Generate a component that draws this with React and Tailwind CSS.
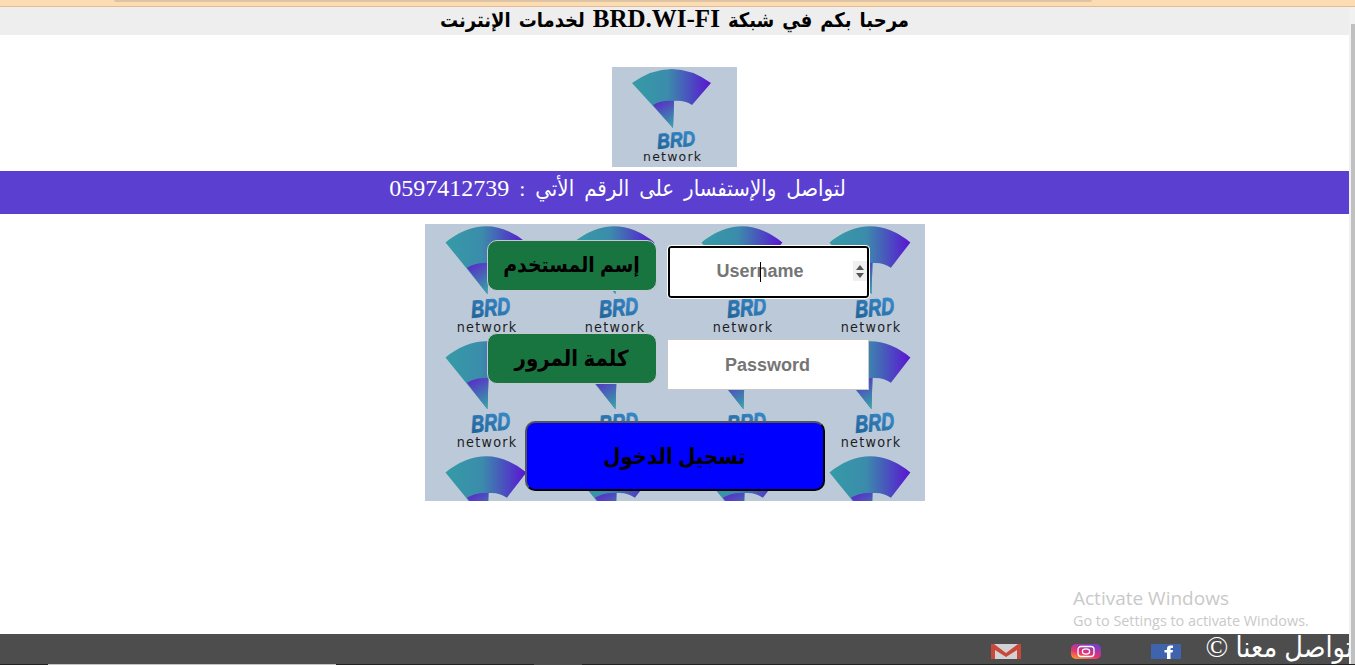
import React from 'react';

const serif = { fontFamily: '"Liberation Serif", "DejaVu Sans Condensed", "DejaVu Sans", serif' };
const arial = { fontFamily: '"Liberation Sans", sans-serif' };

function Logo({ id, className }) {
  return (
    <svg viewBox="0 0 125 100" preserveAspectRatio="none" className={className}>
      <defs>
        <linearGradient id={id + 'a'} x1="0" x2="1" y1="0" y2="0">
          <stop offset="0" stopColor="#359ba6" />
          <stop offset="0.45" stopColor="#3b8cab" />
          <stop offset="1" stopColor="#5a14d2" />
        </linearGradient>
        <linearGradient id={id + 'b'} x1="0.3" x2="0.7" y1="0" y2="1">
          <stop offset="0" stopColor="#5a2cc8" />
          <stop offset="1" stopColor="#37a0a6" />
        </linearGradient>
        <linearGradient id={id + 'c'} x1="0" x2="1" y1="1" y2="0">
          <stop offset="0" stopColor="#1c5f94" />
          <stop offset="1" stopColor="#3a8fd0" />
        </linearGradient>
      </defs>
      <path d="M20 16 Q60 -12 99 16 L80 38 Q72 33 62 34 L61 61 Z" fill={`url(#${id}a)`} />
      <path d="M41 38 Q50 33 62 34 L61 61 Z" fill={`url(#${id}b)`} />
      <text
        x="45"
        y="80"
        textLength="38"
        lengthAdjust="spacingAndGlyphs"
        transform="rotate(-5 64 72)"
        fontSize="21"
        fontWeight="700"
        fontStyle="italic"
        fill={`url(#${id}c)`}
        stroke={`url(#${id}c)`}
        strokeWidth="0.8"
        fontFamily="Liberation Sans, sans-serif"
      >
        BRD
      </text>
      <text x="31" y="93.5" textLength="58" lengthAdjust="spacing" fontSize="12.5" fill="#1d1d1d" fontFamily="DejaVu Sans, sans-serif">
        network
      </text>
    </svg>
  );
}

function FieldLabel({ children }) {
  return (
    <div
      className="w-[170px] h-[51px] shrink-0 flex items-center justify-center rounded-[10px] border border-[#c4c9cf] bg-[#197540] text-black text-[22px] font-bold font-stretch-condensed whitespace-nowrap"
      style={serif}
    >
      {children}
    </div>
  );
}

function GmailIcon() {
  return (
    <svg viewBox="0 0 30 15" className="w-[30px] h-[15px]">
      <rect width="30" height="15" fill="#d2d2d2" />
      <path d="M0 0 H3 L15 9 L27 0 H30 V15 H26 V6 L15 13 L4 6 V15 H0 Z" fill="#c9483c" />
    </svg>
  );
}

function InstagramIcon() {
  return (
    <svg viewBox="0 0 30 15" className="w-[30px] h-[15px]">
      <defs>
        <linearGradient id="ig" x1="0" x2="0.6" y1="1" y2="0">
          <stop offset="0" stopColor="#f9a825" />
          <stop offset="0.45" stopColor="#e8336f" />
          <stop offset="1" stopColor="#7a3fc4" />
        </linearGradient>
      </defs>
      <rect width="30" height="15" rx="5" fill="url(#ig)" />
      <rect x="7" y="2.5" width="16" height="10" rx="3" fill="none" stroke="#fff" strokeWidth="1.3" />
      <ellipse cx="15" cy="7.5" rx="3.6" ry="2.6" fill="none" stroke="#fff" strokeWidth="1.3" />
    </svg>
  );
}

function FacebookIcon() {
  return (
    <svg viewBox="0 0 30 15" className="w-[30px] h-[15px]">
      <rect width="30" height="15" fill="#3f64ad" />
      <path d="M16 15 V8.5 H13.5 V6 H16 V4.5 Q16 1.5 19.5 1.5 H22 V4 H20.5 Q19.5 4 19.5 5 V6 H22 L21.5 8.5 H19.5 V15 Z" fill="#fff" />
    </svg>
  );
}

export default function App() {
  const tiles = Array.from({ length: 12 }, (_, i) => i);

  return (
    <div className="relative w-[1355px] h-[665px] overflow-hidden flex flex-col bg-white">
      {/* browser strip at the top */}
      <div className="h-[7px] shrink-0 bg-[#fddcb3] border-b border-[#e3bd8e] px-[114px]">
        <div className="h-[2px] w-[978px] rounded-b bg-[#dcc4a4]" />
      </div>

      <div className="flex flex-1 min-h-0">
        <main className="w-[1349px] flex flex-col">
          <div
            dir="rtl"
            className="h-[28px] shrink-0 bg-[#eeeeee] flex justify-center text-black text-[20px] leading-[24px] font-bold font-stretch-condensed [word-spacing:3px]"
            style={serif}
          >
            <div>
              مرحبا بكم في شبكة <span className="text-[25px]">BRD.WI-FI</span> لخدمات الإنترنت
            </div>
          </div>

          <div className="mt-[32px] flex justify-center">
            <div className="w-[125px] h-[100px] bg-[#bbc9d8]">
              <Logo id="top" className="w-full h-full" />
            </div>
          </div>

          <div
            dir="rtl"
            className="mt-[4px] h-[43px] shrink-0 bg-[#5a3fd0] flex justify-center pr-[114px] text-white text-[22px] leading-[35px] font-stretch-condensed [word-spacing:4.5px]"
            style={serif}
          >
            <div>
              لتواصل والإستفسار على الرقم الأتي : <span className="text-[24px]">0597412739</span>
            </div>
          </div>

          <div className="relative mt-[10px] mx-auto w-[500px] h-[277px] overflow-hidden bg-[#bbc9d8]">
            <div className="absolute top-0 left-0 grid grid-cols-[repeat(4,128px)] auto-rows-[115px]">
              {tiles.map((t) => (
                <Logo key={t} id={'tile' + t} className="w-[128px] h-[115px]" />
              ))}
            </div>

            <form className="relative flex flex-col pl-[62px] pt-[16px]">
              <div className="flex items-start gap-[10px]">
                <FieldLabel>
                  <span className="text-[21px]">إسم المستخدم</span>
                </FieldLabel>
                <div className="relative ml-[1px] mt-[6px]">
                  <input
                    type="text"
                    placeholder="Username"
                    className="block w-[201px] h-[52px] pr-[16px] pb-[2px] bg-white border-2 border-black rounded-[3px] outline outline-1 outline-white text-center text-[18px] font-bold placeholder:text-[#757575]"
                    style={arial}
                  />
                  <span className="absolute left-[92px] top-[16px] w-px h-[20px] bg-black" />
                  <span className="absolute right-[2px] top-[15px] w-[14px] h-[20px] bg-[#f0f0f0] flex flex-col items-center justify-center gap-[3px]">
                    <span className="w-0 h-0 border-x-[4px] border-x-transparent border-b-[5px] border-b-[#555]" />
                    <span className="w-0 h-0 border-x-[4px] border-x-transparent border-t-[5px] border-t-[#555]" />
                  </span>
                </div>
              </div>

              <div className="mt-[35px] flex items-start gap-[10px]">
                <FieldLabel>كلمة المرور</FieldLabel>
                <input
                  type="password"
                  placeholder="Password"
                  className="block mt-[6px] w-[202px] h-[51px] pt-[2px] bg-white border border-[#c8c8c8] text-center text-[18px] font-bold placeholder:text-[#757575]"
                  style={arial}
                />
              </div>

              <button
                type="button"
                className="mt-[31px] ml-[38px] w-[300px] h-[70px] rounded-[10px] border-2 border-t-[#555] border-l-[#555] border-r-black border-b-black bg-[#0000ff] text-black text-[22px] font-bold font-stretch-condensed"
                style={serif}
              >
                تسجيل الدخول
              </button>
            </form>
          </div>

          <footer className="relative mt-auto h-[30px] shrink-0 bg-[#4d4d4d] overflow-hidden flex items-start">
            <div className="flex items-start pl-[991px] pt-[10px] gap-[50px]">
              <GmailIcon />
              <InstagramIcon />
              <FacebookIcon />
            </div>
            <div dir="rtl" className="absolute right-[-4px] top-[-3px] text-white text-[28.5px] leading-[32px] whitespace-nowrap" style={serif}>
              تواصل معنا <span className="text-[30px]">©</span>
            </div>
          </footer>
        </main>

        {/* page scrollbar */}
        <div className="w-[6px] flex flex-col bg-[#f1f1f1] pl-[2px]">
          <div className="h-[17px] shrink-0" />
          <div className="flex-1 bg-[#c0c0c0]" />
        </div>
      </div>

      {/* taskbar edge */}
      <div className="h-px shrink-0 flex bg-[#222222]">
        <div className="ml-[48px] w-[288px] bg-[#c4c4c4]" />
        <div className="ml-[198px] w-[48px] bg-[#4d4d4d]" />
      </div>

      <div className="absolute left-[1073px] top-[586px] text-[#c9c9c9] pointer-events-none" style={{ fontFamily: '"Open Sans", sans-serif' }}>
        <div className="text-[19px] leading-[24px]">Activate Windows</div>
        <div className="text-[14.4px] leading-[20px] mt-[1px]">Go to Settings to activate Windows.</div>
      </div>
    </div>
  );
}
